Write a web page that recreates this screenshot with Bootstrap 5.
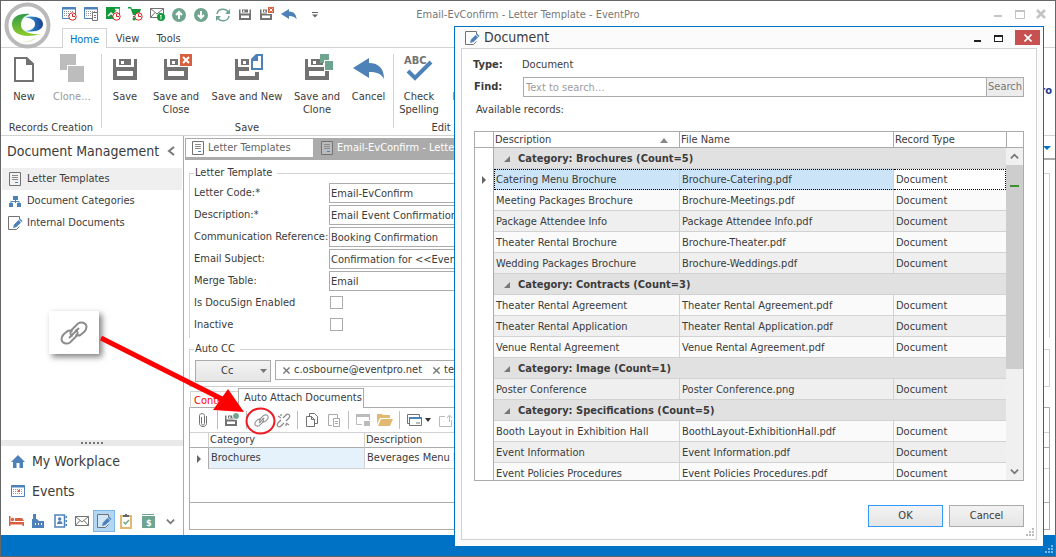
<!DOCTYPE html>
<html lang="en">
<head>
<meta charset="utf-8">
<meta name="viewport" content="width=device-width, initial-scale=1">
<title>Email-EvConfirm - Letter Template - EventPro</title>
<link rel="stylesheet" href="https://cdn.jsdelivr.net/npm/bootstrap@5.3.0/dist/css/bootstrap.min.css">
<style>
:root{--blue:#0072c6;--line:#ababab;--soft:#d2d2d2;--ink:#3b3b3b}
body{font:11px/14px "DejaVu Sans Condensed","Liberation Sans",sans-serif;color:var(--ink);background:#fff}
button,input{font:inherit;color:inherit}
button{border:0;background:none;padding:0}
a{color:inherit;text-decoration:none}
svg{display:block;flex:none}
.app-window{min-height:100vh;border:1px solid #666;position:relative}
.title-bar{height:27px;position:relative;padding-left:57px}
.title-bar h1{font-size:11px;line-height:27px;color:#777}
.qa-btn{width:22px;height:27px;display:grid;place-items:center}
.orb{position:absolute;left:3px;top:1px;z-index:3}
.win-ctl{position:absolute;right:5px;top:4px;color:#c3c3c3}
.ribbon-tabs{height:20px;border-bottom:1px solid var(--soft);padding-left:61px}
.ribbon-tabs a{height:19px;line-height:22px;text-align:center}
.ribbon-tabs .tab-on{height:20px;width:45px;border:1px solid var(--soft);border-bottom:0;background:#fff;color:var(--blue);line-height:21px}
.ribbon-tabs .tab-off{width:41px}
.ribbon{height:88px;border-bottom:1px solid var(--soft)}
.rib-group{padding-top:5px;position:relative}
.rib-group+.rib-group::before{content:"";position:absolute;left:0;top:6px;bottom:7px;width:1px;background:var(--soft)}
.rib-group h2{font-size:11px;line-height:14px;text-align:center;margin:0}
.rib-btn{line-height:13px;display:flex;flex:none;flex-direction:column;align-items:center;gap:7px;height:66px}
.rib-btn:disabled{color:#9a9a9a}
.brand-end{position:absolute;right:3px;top:36px;color:#1e3a8f;font-weight:bold}
.side{width:183px;border-right:1px solid var(--line)}
.side-head{height:28px;padding:2px 8px 0 6px;margin-bottom:4px}
.side-head h2{font-size:14px;line-height:20px;margin:0}
.side-item{height:22px;padding-left:6px;margin-left:1px;margin-right:1px;gap:5px}
.side-item .ico{width:14px;display:grid;place-items:center}
.side-item.on{background:#efefef}
.splitter{height:6px;background:#e9e9e9}
.big-item{height:30px;font-size:14px;padding-left:10px;gap:7px}
.mod-row{height:29px;padding:4px 0 0 4px}
.mod-btn{width:22px;height:22px;display:grid;place-items:center;border:1px solid transparent}
.mod-btn.on{background:#b3d7f2;border-color:#7db5e6}
.main-pane{margin-left:1px;min-width:0}
.doc-tabs{height:22px;margin-top:2px;border-bottom:2px solid var(--line);position:relative}
.doc-tab{height:20px;padding-left:6px;gap:4px;color:#666}
.doc-tab.off{width:129px;border:1px solid var(--line)}
.doc-tab.on{width:220px;padding-left:7px;background:var(--line);color:#fff}
fieldset{border:1px solid var(--soft);margin:0 5px 0 4px;padding:0 5px}
fieldset legend{font-size:11px;line-height:14px;float:none;width:auto;margin:0 0 0 -1px;padding:0 5px 0 1px}
.fs-open{border-bottom:0;margin-top:6px;padding-top:3px;padding-bottom:1px}
.fs-cc{padding-top:4px;padding-bottom:4px;margin-top:4px}
.form-line{height:22px;align-items:flex-start}
.form-line label{width:134px;margin-left:-1px;margin-right:1px;line-height:20px;white-space:nowrap}
.form-line input[type=text]{height:20px;border:1px solid var(--line);padding:0 1px;border-radius:0;flex:1;min-width:0}
.form-line input[type=checkbox]{appearance:none;width:13px;height:13px;border:1px solid var(--line);margin:3px 0 0 1px}
.push{border:1px solid var(--line);background:linear-gradient(#f3f3f3,#e5e5e5)}
.cc-btn{width:76px;height:22px;padding:0 3px 0 25px}
.token-box{height:20px;border:1px solid var(--line);padding-left:7px;gap:11px;overflow:hidden}
.sub-tabs{margin:1px 5px -1px 4px;height:20px;padding-left:1px;position:relative}
.sub-tabs a{border:1px solid var(--line);border-bottom:0;white-space:nowrap;line-height:17px}
.sub-tabs .t-off{height:17px;width:48px;padding-left:3px;border-right:0;border-color:var(--soft);color:#f00}
.sub-tabs .t-on{height:20px;width:126px;background:#fff;z-index:1;padding-left:5px}
.attach{margin:0 5px 5px 4px;border:1px solid var(--line)}
.tools{height:24px}
.tool-btn{width:22px;height:24px;display:grid;place-items:center}
.tool-sep{width:1px;height:18px;background:#bdbdbd;margin:0 3px}
.grid-tbl{table-layout:fixed;width:100%;border-collapse:separate;border-spacing:0}
.grid-tbl th,.grid-tbl td{padding:0 0 0 2px;white-space:nowrap;overflow:hidden;font-weight:normal}
.grid-tbl th{height:16px;border-bottom:1px solid var(--line);border-right:1px solid var(--line);line-height:14px;padding-left:1px;padding-top:1px}
.grid-tbl td{height:21px;border-bottom:1px solid var(--soft);border-right:1px solid var(--soft);line-height:14px;padding-top:2px}
.grid-tbl td.ind{border-bottom:0;border-right-color:var(--line);padding:0}
.attach .grid-tbl th{border-top:1px solid var(--soft);border-right-color:var(--soft);padding-top:0}
.attach .grid-tbl td{padding-top:0}
.grid-foot{height:27px;border-top:1px solid var(--line)}
.status{height:21px;background:var(--blue);position:relative}
.grip{position:absolute;right:1px;bottom:2px}
.callout{position:absolute;left:48px;top:310px;width:50px;height:43px;background:#fff;box-shadow:3px 3px 6px rgba(0,0,0,.5);display:grid;place-items:center}
.pointer{position:absolute;left:-1px;top:-1px;z-index:4;pointer-events:none}
.dlg{position:absolute;right:11px;top:25px;width:590px;border:1px solid var(--blue);background:#fbfbfb;z-index:5;padding:0 6px 6px}
.dlg-title{height:21px;padding-left:4px;gap:4px}
.dlg-title h2{font-size:14px;line-height:21px;margin:0}
.dlg-close{width:25px;height:15px;background:#c75050;display:grid;place-items:center}
.dlg-body{border:1px solid var(--soft);background:#fff;padding:8px 12px 12px;position:relative}
.dlg-body b{width:49px;margin-left:-1px}
.find{height:20px;margin-top:4px;padding-left:1px}
.find input{flex:1;height:20px;border:1px solid var(--line);border-radius:0;padding:0 2px}
.find input::placeholder{color:#9d9d9d;opacity:1}
.find button{width:37px;height:20px;border:1px solid var(--line);border-left:0;background:#ececec;color:#777}
.rec-label{margin:6px 0 14px 2px}
.rec-grid{border:1px solid var(--line);height:350px;overflow:hidden}
.rec-grid tr.odd td{background:#fafafa}
.rec-grid tr.even td{background:#efefef}
.rec-grid tr.grp td{background:#e1e1e1;font-weight:bold;padding-left:10px;border-right:0}
.rec-grid tr td.ind{background:#fff!important;border-right:1px solid var(--line)!important;padding:0!important}
.rec-grid tr td:last-child{border-right:0}
.rec-grid tr.cur td:not(.ind){background:#cce4f7;border-top:1px dotted #000;border-bottom:1px dotted #000;padding-top:0}
.rec-grid tr.cur td:nth-child(2){border-left:1px dotted #000;padding-left:1px}
.rec-grid tr.cur td:last-child{background:#fff!important;border-right:1px dotted #000!important}
.tri{display:inline-block;width:0;height:0;border-left:6px solid transparent;border-bottom:6px solid #777;margin-right:8px}
.row-mark{width:0;height:0;border:4px solid transparent;border-left:4px solid #666;border-right:0;margin:0 auto}
.sbar{width:17px;background:#f0f0f0}
.sbar-head{height:16px;background:#fff;border-bottom:1px solid var(--line);border-left:1px solid var(--line)}
.sbar button{height:17px;display:grid;place-items:center}
.thumb{height:204px;background:#cdcdcd;padding:20px 4px 0}
.thumb i{display:block;height:2px;background:#3f8f2f}
.dlg-btns{margin-top:24px;gap:6px}
.dlg-btns button{width:75px;height:22px}
.dlg-btns .ok{border-color:#3399ff}
</style>
<script src="https://cdn.jsdelivr.net/npm/bootstrap@5.3.0/dist/js/bootstrap.bundle.min.js"></script>
</head>
<body>
<svg width="0" height="0" class="position-absolute" aria-hidden="true">
<defs>
<symbol id="floppy" viewBox="0 0 24 24"><path fill="#727272" fill-rule="evenodd" d="M0 3h3v8h18V3h3v21H0zM4 15v5h16v-5zM6 3h8v6H6zM8 5v3h3V5zM14 3h4v6h-4z"/></symbol>
<symbol id="closebox" viewBox="0 0 12 12"><path fill="#d9603f" d="M0 0h12v12H0z"/><path stroke="#fff" stroke-width="2" d="M3 3l6 6M9 3L3 9"/></symbol>
<symbol id="undo" viewBox="0 0 32 22"><path fill="#4d82b8" d="M0 10L16 0v5c10 0 15 6 15 16-3-6-8-7-15-7v6z"/></symbol>
<symbol id="letter" viewBox="0 0 12 14"><path fill="#fff" fill-opacity=".2" stroke="#727272" d="M.5.5h11v13H.5z"/><path stroke="#8a8a8a" d="M3 3.500h6M3 5.500h6M3 7.500h6"/><path stroke="#4d82b8" d="M6 10.500h3"/></symbol>
<symbol id="docedit" viewBox="0 0 15 14"><path fill="#fff" fill-opacity=".4" stroke="#727272" d="M11.500 3V.5H.5v13h8l3-3"/><path fill="#4d82b8" d="M5 12l1-3.500L10.500 4l2.500 2.500L8.500 11zM11 3.500l1-1L14.500 5l-1 1z"/></symbol>
<symbol id="cal" viewBox="0 0 14 12"><path fill="#fff" stroke="#4d82b8" d="M.5.500h13v11H.5z"/><path stroke="#4d82b8" stroke-width="2" d="M0 1.500h14"/><path stroke="#999" stroke-dasharray="1 1" d="M2 4.500h10M2 6.500h10M2 8.500h10"/></symbol>
<symbol id="clock" viewBox="0 0 9 9"><circle cx="4.500" cy="4.500" r="3.700" fill="#fff" stroke="#d22"/><path fill="none" stroke="#d22" d="M4.500 2v2.500H7"/></symbol>
<symbol id="mail" viewBox="0 0 14 10"><path fill="#fff" stroke="#727272" d="M.5.5h13v9H.5zM.5.500L7 6l6.500-5.500M.5 9.500l4.500-5M13.500 9.500L9 4.500"/></symbol>
<symbol id="link" viewBox="0 0 28 28"><g fill="none" stroke="#8c8c8c" stroke-width="2"><path d="M12.500 17.500c-3-2-2.500-5-.5-7l6-6c3-2 8-1 8.500 3 0 2-1 4-2 5l-4 3.500c-2 1-3 1-5-.500"/><path d="M15.500 10.500c3 2 2.500 5 .5 7l-6 6c-3 2-8 1-8.500-3 0-2 1-4 2-5l4-3.500c2-1 3-1 5 .500"/><path d="M9 19L19 9"/></g></symbol>
<symbol id="x" viewBox="0 0 8 8"><path stroke="currentColor" stroke-width="1.600" d="M.5.5l7 7M7.500.5l-7 7"/></symbol>
<symbol id="chev" viewBox="0 0 10 10"><path fill="none" stroke="#777" stroke-width="2" d="M1 3l4 4 4-4"/></symbol>
<symbol id="grip" viewBox="0 0 9 9"><path fill="currentColor" d="M6 0h2v2H6zM3 3h2v2H3zM6 3h2v2H6zM0 6h2v2H0zM3 6h2v2H3zM6 6h2v2H6z"/></symbol>
</defs>
</svg>

<div class="app-window d-flex flex-column">
  <div class="orb">
    <svg width="47" height="47" viewBox="0 0 47 47"><defs><linearGradient id="ga" x2="0" y2="1"><stop stop-color="#2f9a4a"/><stop offset="1" stop-color="#8fcb2a"/></linearGradient><linearGradient id="gb" x1="0" x2="1"><stop stop-color="#39b0e4"/><stop offset="1" stop-color="#1b3f93"/></linearGradient></defs>
    <circle cx="23.500" cy="23.500" r="21" fill="#fff" stroke="#bababa" stroke-width="4"/>
    <path fill="url(#ga)" d="M26 12C15 11 8 15 8 22c0 10 11 15 29 10-12 1-20-3-20-9 0-6 3-9 9-11z"/><path fill="url(#gb)" d="M20 15c12-2 19 1 19 7 0 5-6 9-18 7 6 0 10-3 10-7 0-4-4-6-11-7z"/><path fill="#c9df9a" opacity=".6" d="M15 40c8 0 13-2 17-5-1 4-8 6-17 5z"/></svg>
  </div>
  <header class="title-bar d-flex">
    <button class="qa-btn" aria-label="Calendar"><svg width="15" height="15"><use href="#cal" width="14" height="12"/><use href="#clock" x="6" y="5" width="9" height="9"/></svg></button>
    <button class="qa-btn" aria-label="Schedule"><svg width="15" height="15"><use href="#cal" width="14" height="12"/><path fill="#fff" stroke="#727272" d="M8.500 5.500h5v8h-5zM10 8.500h2M10 10.500h2"/></svg></button>
    <button class="qa-btn" aria-label="Statistics"><svg width="15" height="15"><path fill="#129a3a" d="M0 0h14v12H0z"/><path fill="none" stroke="#fff" stroke-width="1.500" d="M2 9l3-3 2 2 5-5M9 2.500h3.500V6"/><use href="#clock" x="6" y="5" width="9" height="9"/></svg></button>
    <button class="qa-btn" aria-label="Orders"><svg width="15" height="15"><path fill="#129a3a" d="M0 0h3l1 2h9l-2 6H5L2.500 1.500H0zM5 9h6v1.500H5z"/><circle cx="6" cy="12" r="1.500" fill="#129a3a"/><use href="#clock" x="6" y="5" width="9" height="9"/></svg></button>
    <button class="qa-btn" aria-label="Messages"><svg width="15" height="15"><use href="#mail" y="1" width="14" height="10"/><circle cx="11" cy="10" r="4" fill="#129a3a"/><path stroke="#fff" d="M11 8v4.500M10 8.500h1"/></svg></button>
    <button class="qa-btn" aria-label="Up"><svg width="14" height="14"><circle cx="7" cy="7" r="7" fill="#6fa58f"/><path stroke="#fff" stroke-width="2" fill="none" d="M7 11V4M4 7l3-3 3 3"/></svg></button>
    <button class="qa-btn" aria-label="Down"><svg width="14" height="14"><circle cx="7" cy="7" r="7" fill="#6fa58f"/><path stroke="#fff" stroke-width="2" fill="none" d="M7 3v7M4 7l3 3 3-3"/></svg></button>
    <button class="qa-btn" aria-label="Refresh"><svg width="14" height="14"><path fill="none" stroke="#6fa58f" stroke-width="1.500" d="M1 6c1-6 9-6 11-2M13 8c-1 6-9 6-11 2"/><path fill="#6fa58f" d="M14 1v5H9zM0 13V8h5z"/></svg></button>
    <button class="qa-btn" aria-label="Save"><svg width="12" height="14"><use href="#floppy" width="12" height="12"/></svg></button>
    <button class="qa-btn" aria-label="Save and Close"><svg width="14" height="15"><use href="#floppy" y="1" width="12" height="12"/><path fill="#fff" d="M7 0h7v7H7z"/><use href="#closebox" x="8" width="6" height="6"/></svg></button>
    <button class="qa-btn" aria-label="Undo"><svg width="16" height="11"><use href="#undo" width="16" height="11"/></svg></button>
    <button class="qa-btn ms-1" aria-label="Customize"><svg width="6" height="6"><path fill="#666" d="M0 0h6v1H0zM0 2.500h6l-3 3z"/></svg></button>
    <h1 class="position-absolute start-0 end-0 top-0 m-0 text-center fw-normal pe-none">Email-EvConfirm - Letter Template - EventPro</h1>
    <svg class="win-ctl" width="56" height="18" fill="none" stroke="currentColor" stroke-width="2"><path d="M0 11h8"/><path d="M21.500 5.500h9v8h-9z" stroke-width="1"/><path d="M21 6h10"/><path d="M43 5l8 8M51 5l-8 8" stroke-width="2.500"/></svg>
  </header>
  <nav class="ribbon-tabs d-flex">
    <a href="#" class="tab-on">Home</a><a href="#" class="tab-off">View</a><a href="#" class="tab-off">Tools</a>
  </nav>
  <section class="ribbon d-flex position-relative">
    <div class="rib-group d-flex flex-column justify-content-between" style="width:100px">
      <div class="d-flex">
        <button class="rib-btn" style="width:46px"><svg width="32" height="30"><path fill="#fff" stroke="#727272" stroke-width="2" d="M7 5h11l7 6v17H7z"/><path fill="#727272" d="M18 4h1l7 7v1h-8z"/></svg>New</button>
        <button class="rib-btn" style="width:50px" disabled><svg width="32" height="30"><path fill="#bdbdbd" d="M4 1h16v11h-9v5H4zM12 13h16v16H12z"/></svg>Clone…</button>
      </div><h2>Records Creation</h2>
    </div>
    <div class="rib-group d-flex flex-column justify-content-between" style="width:292px">
      <div class="d-flex ps-1">
        <button class="rib-btn" style="width:40px"><svg width="32" height="30"><use href="#floppy" x="4" y="3" width="24" height="24"/></svg>Save</button>
        <button class="rib-btn" style="width:62px"><svg width="32" height="30"><use href="#floppy" x="4" y="3" width="24" height="24"/><path fill="#fff" d="M18 0h14v14H18z"/><use href="#closebox" x="20" y="1" width="12" height="12"/></svg>Save and<br>Close</button>
        <button class="rib-btn" style="width:80px"><svg width="32" height="30"><use href="#floppy" x="4" y="3" width="24" height="24"/><path fill="#fff" d="M18 0h14v19H18z"/><path fill="#fff" stroke="#4d82b8" stroke-width="2" d="M21 7l5-5h5v14H21z"/><path fill="#4d82b8" d="M20 6l5-5h2v7h-7z"/></svg>Save and New</button>
        <button class="rib-btn" style="width:60px"><svg width="32" height="30"><use href="#floppy" x="4" y="3" width="24" height="24"/><path fill="#6fa58f" d="M19 1h9v9h-9z"/><path fill="#fff" d="M23 7h9v11h-9z"/><path fill="#6fa58f" d="M24 8h8v9h-8z"/></svg>Save and<br>Clone</button>
        <button class="rib-btn" style="width:43px"><svg width="32" height="30"><use href="#undo" y="5" width="32" height="22"/></svg>Cancel</button>
      </div><h2>Save</h2>
    </div>
    <div class="rib-group d-flex flex-column justify-content-between" style="width:96px">
      <div class="d-flex ps-1">
        <button class="rib-btn" style="width:44px"><svg width="32" height="30" overflow="visible"><path fill="none" stroke="#4d82b8" stroke-width="4" d="M5 18l7 7L28 9"/><text x="1" y="11" font-size="11" font-weight="bold" fill="#727272">ABC</text></svg>Check<br>Spelling</button>
        <button class="rib-btn" style="width:74px"><svg width="32" height="30"></svg>Dictionary</button>
      </div><h2>Edit</h2>
    </div>
    <div class="brand-end">ro</div>
  </section>

  <div class="d-flex flex-grow-1">
    <aside class="side d-flex flex-column flex-shrink-0">
      <div class="side-head d-flex align-items-center justify-content-between"><h2 class="fw-normal">Document Management</h2><svg width="8" height="10"><path fill="none" stroke="#777" stroke-width="2" d="M7 1L2 5l5 4"/></svg></div>
      <a href="#" class="side-item on d-flex align-items-center"><span class="ico"><svg width="12" height="14"><use href="#letter"/></svg></span>Letter Templates</a>
      <a href="#" class="side-item d-flex align-items-center"><span class="ico"><svg width="12" height="11"><path fill="#4d82b8" d="M4 0h5v4H4zM0 7h4v4H0zM8 7h4v4H8zM6 4h1v3H6zM1.500 5h9v2h-1V6h-7v1h-1z"/></svg></span>Document Categories</a>
      <a href="#" class="side-item d-flex align-items-center"><span class="ico"><svg width="15" height="14"><use href="#docedit"/></svg></span>Internal Documents</a>
      <div class="flex-grow-1"></div>
      <div class="splitter d-flex justify-content-center align-items-center"><svg width="22" height="2"><path stroke="#777" stroke-width="2" stroke-dasharray="2 2" d="M0 1h22"/></svg></div>
      <a href="#" class="big-item d-flex align-items-center"><svg width="14" height="13"><path fill="#4d82b8" d="M7 0l7 7h-2v6H8.500V8h-3v5H2V7H0z"/></svg>My Workplace</a>
      <a href="#" class="big-item d-flex align-items-center"><svg width="14" height="12"><use href="#cal"/><path fill="#d9603f" d="M7 5h2v2H7z"/></svg>Events</a>
      <div class="mod-row d-flex">
        <button class="mod-btn" aria-label="Rooms"><svg width="15" height="12"><path fill="#d9603f" d="M0 1h1.500v6H15v4h-1.500V9.500h-12V11H0zM6 3h7l2 3H6z"/><circle cx="3.500" cy="4.500" r="1.700" fill="#d9603f"/></svg></button>
        <button class="mod-btn" aria-label="Venues"><svg width="13" height="14"><path fill="#4d82b8" fill-rule="evenodd" d="M0 14V5h1V0h3v5h1l2 2h5v7zM3 9v2h1V9zm3 0v2h1V9zm3 0v2h1V9z"/></svg></button>
        <button class="mod-btn" aria-label="Contacts"><svg width="13" height="14"><path fill="#fff" stroke="#4d82b8" stroke-width="1.500" d="M1 1h9.500v12H1z"/><circle cx="5.700" cy="5" r="1.700" fill="#4d82b8"/><path fill="#4d82b8" d="M3 10c0-4 5.500-4 5.500 0zM11.500 2H13v2h-1.500zM11.500 6H13v2h-1.500zM11.500 10H13v2h-1.500z"/></svg></button>
        <button class="mod-btn" aria-label="Mail"><svg width="14" height="10"><use href="#mail"/></svg></button>
        <button class="mod-btn on" aria-label="Documents"><svg width="15" height="14"><use href="#docedit"/></svg></button>
        <button class="mod-btn" aria-label="Tasks"><svg width="12" height="15"><path fill="#fff" stroke="#e3b871" stroke-width="2" d="M1 2h10v12H1z"/><path fill="#666" d="M3 1h2V0h2v1h2v2H3z"/><path fill="none" stroke="#6fa58f" stroke-width="1.500" d="M3.500 8l2 2 3.500-4"/></svg></button>
        <button class="mod-btn" aria-label="Accounting"><svg width="13" height="14"><path fill="#6fa58f" d="M0 0h12v1H0zM0 2h13v12H0z"/><text x="4" y="12" font-size="9" font-weight="bold" fill="#fff">$</text></svg></button>
        <button class="mod-btn" aria-label="More"><svg width="9" height="9"><use href="#chev"/></svg></button>
      </div>
    </aside>

    <main class="main-pane flex-grow-1 d-flex flex-column">
      <div class="doc-tabs d-flex">
        <a href="#" class="doc-tab off d-flex align-items-center"><svg width="12" height="14"><use href="#letter"/></svg>Letter Templates</a>
        <a href="#" class="doc-tab on d-flex align-items-center"><svg width="12" height="14"><use href="#letter"/></svg>Email-EvConfirm - Letter Template</a>
        <svg class="ms-auto me-1 mt-2" width="8" height="5"><path fill="#0072c6" d="M0 0h8L4 4z"/></svg>
      </div>
      <fieldset class="fs-open">
        <legend>Letter Template</legend>
        <div class="form-line d-flex"><label for="f1">Letter Code:*</label><input id="f1" type="text" value="Email-EvConfirm"></div>
        <div class="form-line d-flex"><label for="f2">Description:*</label><input id="f2" type="text" value="Email Event Confirmation to Client"></div>
        <div class="form-line d-flex"><label for="f3">Communication Reference:</label><input id="f3" type="text" value="Booking Confirmation"></div>
        <div class="form-line d-flex"><label for="f4">Email Subject:</label><input id="f4" type="text" value="Confirmation for &lt;&lt;EventName&gt;&gt;"></div>
        <div class="form-line d-flex"><label for="f5">Merge Table:</label><input id="f5" type="text" value="Email"></div>
        <div class="form-line d-flex"><label for="f6">Is DocuSign Enabled</label><input id="f6" type="checkbox"></div>
        <div class="form-line d-flex"><label for="f7">Inactive</label><input id="f7" type="checkbox"></div>
      </fieldset>
      <fieldset class="fs-cc">
        <legend>Auto CC</legend>
        <div class="d-flex gap-1">
          <button class="push cc-btn d-flex align-items-center justify-content-between">Cc<svg width="7" height="4"><path fill="#777" d="M0 0h7L3.500 4z"/></svg></button>
          <div class="token-box d-flex align-items-center flex-grow-1"><span class="d-flex align-items-center gap-1"><svg width="7" height="7" color="#777"><use href="#x"/></svg>c.osbourne@eventpro.net</span><span class="d-flex align-items-center gap-1"><svg width="7" height="7" color="#777"><use href="#x"/></svg>test@eventpro.net</span></div>
        </div>
      </fieldset>
      <nav class="sub-tabs d-flex align-items-end"><a href="#" class="t-off">Content</a><a href="#" class="t-on">Auto Attach Documents</a></nav>
      <section class="attach d-flex flex-column flex-grow-1">
        <div class="tools d-flex align-items-center ps-1" style="margin-left:-2px">
          <button class="tool-btn" aria-label="Attach"><svg width="8" height="14" fill="none" stroke="#727272"><path d="M2.500 4v6.500c0 2 3 2 3 0V2.500c0-2.500-5-2.500-5 0v8c0 4 7 4 7 0V3"/></svg></button>
          <span class="tool-sep"></span>
          <button class="tool-btn" aria-label="Save"><svg width="14" height="14"><use href="#floppy" y="1" width="12" height="12"/><circle cx="11" cy="3" r="3.500" fill="#6fa58f" stroke="#fff"/></svg></button>
          <span class="tool-sep"></span>
          <button class="tool-btn" aria-label="Link"><svg width="15" height="15"><use href="#link"/></svg></button>
          <button class="tool-btn" aria-label="Unlink"><svg width="15" height="15" fill="none" stroke="#888" stroke-width="1.200"><path d="M7 5l3-3c2-2 5 0 3 3l-3 3M8 10l-3 3c-2 2-5 0-3-3l3-3M2 3l3 2M13 12l-3-2M5 1v2M10 13v-2"/></svg></button>
          <span class="tool-sep"></span>
          <button class="tool-btn" aria-label="Copy"><svg width="12" height="14" fill="#fff" stroke="#727272"><path d="M3.500.5h5l3 3v7h-8z"/><path d="M.5 3.500h5l3 3v7h-8zM5.500 3.500v3h3"/></svg></button>
          <button class="tool-btn" aria-label="Paste"><svg width="13" height="14" fill="none" stroke="#aaa"><path d="M4 12.500H.5v-11h9V5M3 1.500h4" /><path d="M5.500 5.500h6v8h-6zM7 8.500h3M7 10.500h3"/></svg></button>
          <span class="tool-sep"></span>
          <button class="tool-btn" aria-label="New record"><svg width="14" height="12"><path fill="none" stroke="#bbb" d="M6 10.500H.5v-10h13V6"/><path fill="#bbb" d="M0 0h14v3H0zM8 7h6v5H8z"/></svg></button>
          <button class="tool-btn" aria-label="Open"><svg width="16" height="12"><path fill="#e3b871" d="M0 0h5l1 1h7v3H3L0 10zM4 5h12l-3 7H1z"/></svg></button>
          <span class="tool-sep"></span>
          <button class="tool-btn" aria-label="View"><svg width="15" height="13"><path fill="#fff" stroke="#727272" d="M.5.500h12v9H.5z"/><path fill="#fff" stroke="#727272" d="M2.500 3.500h12v8h-12z"/><path fill="#4d82b8" d="M2 3h13v2H2z"/><path fill="#bbb" d="M9 8h4v2H9z"/></svg></button>
          <svg width="6" height="4" class="me-1"><path fill="#333" d="M0 0h6L3 4z"/></svg>
          <button class="tool-btn" aria-label="Export"><svg width="15" height="13"><path fill="none" stroke="#bbb" d="M6 2.500H.5v10h12V6M10.500 8V2M8 4l2.500-3L13 4"/></svg></button>
        </div>
        <table class="grid-tbl">
          <colgroup><col style="width:19px"><col style="width:156px"><col></colgroup>
          <thead><tr><th></th><th>Category</th><th class="border-end-0">Description</th></tr></thead>
          <tbody><tr><td class="ind"><div class="row-mark"></div></td><td style="background:#e5f1fb">Brochures</td><td class="border-end-0">Beverages Menu Brochure</td></tr></tbody>
        </table>
        <div class="flex-grow-1"></div>
        <div class="grid-foot"></div>
      </section>
    </main>
  </div>
  <footer class="status"><svg class="grip text-white-50" width="9" height="9"><use href="#grip"/></svg></footer>

  <div class="callout"><svg width="28" height="28"><use href="#link"/></svg></div>
  <svg class="pointer" width="290" height="450"><path stroke="#f00" stroke-width="5" d="M101 338L222 399"/><path fill="#f00" d="M244 412l-31-2 15-21z"/><ellipse cx="260.500" cy="421" rx="14" ry="12.500" fill="none" stroke="#ed1c24" stroke-width="2"/></svg>

  <section class="dlg" role="dialog" aria-labelledby="dt">
    <div class="dlg-title d-flex align-items-center">
      <svg width="15" height="14"><use href="#docedit"/></svg><h2 id="dt" class="fw-normal">Document</h2>
      <svg class="ms-auto me-2" width="30" height="12"><path fill="#222" d="M1 8h7v2H1zM21 3h9v7h-9z"/><path fill="#fff" d="M22 5h7v4h-7z"/></svg>
      <button class="dlg-close text-white" aria-label="Close" style="margin-right:-3px"><svg width="8" height="8"><use href="#x"/></svg></button>
    </div>
    <div class="dlg-body">
      <div class="d-flex" style="line-height:16px"><b>Type:</b><span>Document</span></div>
      <div class="find d-flex align-items-center"><b><label for="q">Find:</label></b><input id="q" type="text" placeholder="Text to search…"><button>Search</button></div>
      <div class="rec-label">Available records:</div>
      <div class="rec-grid d-flex">
        <div class="flex-grow-1">
        <table class="grid-tbl">
          <colgroup><col style="width:19px"><col style="width:186px"><col style="width:214px"><col></colgroup>
          <thead><tr><th></th><th><span class="d-flex justify-content-between align-items-center">Description<svg width="8" height="5" style="margin-right:11px"><path fill="#888" d="M4 0l4 5H0z"/></svg></span></th><th>File Name</th><th class="border-end-0">Record Type</th></tr></thead>
          <tbody>
          <tr class="grp"><td class="ind"></td><td colspan="3"><span class="tri"></span>Category: Brochures (Count=5)</td></tr>
          <tr class="cur"><td class="ind"><div class="row-mark"></div></td><td>Catering Menu Brochure</td><td>Brochure-Catering.pdf</td><td>Document</td></tr>
          <tr class="odd"><td class="ind"></td><td>Meeting Packages Brochure</td><td>Brochure-Meetings.pdf</td><td>Document</td></tr>
          <tr class="even"><td class="ind"></td><td>Package Attendee Info</td><td>Package Attendee Info.pdf</td><td>Document</td></tr>
          <tr class="odd"><td class="ind"></td><td>Theater Rental Brochure</td><td>Brochure-Theater.pdf</td><td>Document</td></tr>
          <tr class="even"><td class="ind"></td><td>Wedding Packages Brochure</td><td>Brochure-Weddings.pdf</td><td>Document</td></tr>
          <tr class="grp"><td class="ind"></td><td colspan="3"><span class="tri"></span>Category: Contracts (Count=3)</td></tr>
          <tr class="odd"><td class="ind"></td><td>Theater Rental Agreement</td><td>Theater Rental Agreement.pdf</td><td>Document</td></tr>
          <tr class="even"><td class="ind"></td><td>Theater Rental Application</td><td>Theater Rental Application.pdf</td><td>Document</td></tr>
          <tr class="odd"><td class="ind"></td><td>Venue Rental Agreement</td><td>Venue Rental Agreement.pdf</td><td>Document</td></tr>
          <tr class="grp"><td class="ind"></td><td colspan="3"><span class="tri"></span>Category: Image (Count=1)</td></tr>
          <tr class="even"><td class="ind"></td><td>Poster Conference</td><td>Poster Conference.png</td><td>Document</td></tr>
          <tr class="grp"><td class="ind"></td><td colspan="3"><span class="tri"></span>Category: Specifications (Count=5)</td></tr>
          <tr class="odd"><td class="ind"></td><td>Booth Layout in Exhibition Hall</td><td>BoothLayout-ExhibitionHall.pdf</td><td>Document</td></tr>
          <tr class="even"><td class="ind"></td><td>Event Information</td><td>Event Information.pdf</td><td>Document</td></tr>
          <tr class="odd"><td class="ind"></td><td>Event Policies Procedures</td><td>Event Policies Procedures.pdf</td><td>Document</td></tr>
          </tbody>
        </table>
        </div>
        <div class="sbar d-flex flex-column flex-shrink-0">
          <div class="sbar-head"></div>
          <button aria-label="Scroll up"><svg width="9" height="9" style="transform:rotate(180deg)"><use href="#chev"/></svg></button>
          <div class="thumb"><i></i></div>
          <button class="mt-auto" aria-label="Scroll down"><svg width="9" height="9"><use href="#chev"/></svg></button>
        </div>
      </div>
      <div class="dlg-btns d-flex justify-content-end"><button class="push ok">OK</button><button class="push">Cancel</button></div>
      <svg class="grip" width="9" height="9" color="#bbb"><use href="#grip"/></svg>
    </div>
  </section>
</div>
</body>
</html>
